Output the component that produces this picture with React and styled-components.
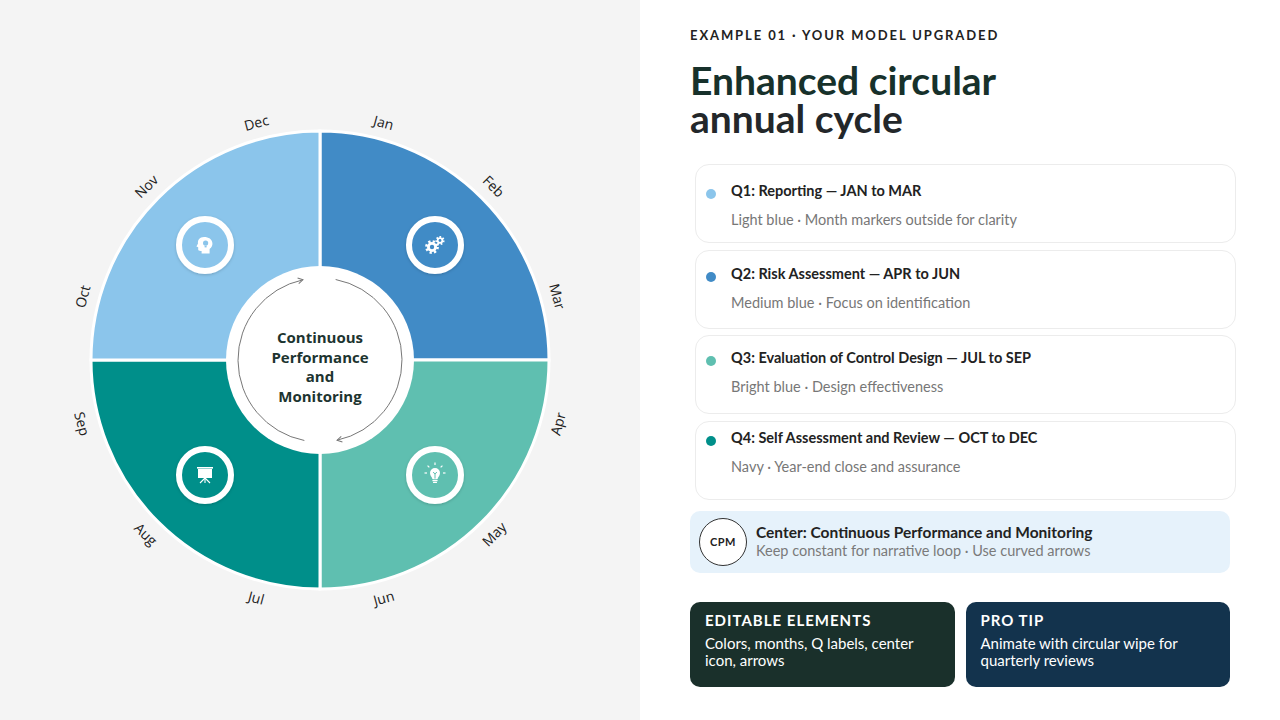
import React from 'react';
import styled, { createGlobalStyle } from 'styled-components';

const GlobalStyle = createGlobalStyle`
  html, body {
    margin: 0;
    padding: 0;
    width: 1280px;
    height: 720px;
    overflow: hidden;
    background: #ffffff;
  }
  * { box-sizing: border-box; }
`;

const SIZE = 540;
const C = SIZE / 2;
const R_OUT = 229;
const R_IN = 94;
const R_LOOP = 82;

// angle measured clockwise from 12 o'clock
const pt = (r, deg) => {
  const a = (deg * Math.PI) / 180;
  return [C + r * Math.sin(a), C - r * Math.cos(a)];
};

const quadrants = [
  { from: 0, to: 90, color: '#418bc6', icon: 'gears', bx: 1, by: -1 },
  { from: 90, to: 180, color: '#5fbfb0', icon: 'bulb', bx: 1, by: 1 },
  { from: 180, to: 270, color: '#008f8a', icon: 'board', bx: -1, by: 1 },
  { from: 270, to: 360, color: '#8bc5eb', icon: 'head', bx: -1, by: -1 },
];

const months = ['Jan', 'Feb', 'Mar', 'Apr', 'May', 'Jun', 'Jul', 'Aug', 'Sep', 'Oct', 'Nov', 'Dec'];

const quarters = [
  { dot: '#8bc5eb', pad: 16, title: 'Q1: Reporting — JAN to MAR', sub: 'Light blue · Month markers outside for clarity' },
  { dot: '#418bc6', pad: 13, title: 'Q2: Risk Assessment — APR to JUN', sub: 'Medium blue · Focus on identification' },
  { dot: '#5fbfb0', pad: 12, title: 'Q3: Evaluation of Control Design — JUL to SEP', sub: 'Bright blue · Design effectiveness' },
  { dot: '#008f8a', pad: 6, title: 'Q4: Self Assessment and Review — OCT to DEC', sub: 'Navy · Year-end close and assurance' },
];

const Page = styled.div`
  display: flex;
  width: 1280px;
  height: 720px;
`;

const ChartPanel = styled.section`
  width: 640px;
  height: 720px;
  background: #f4f4f4;
  display: flex;
  align-items: center;
  justify-content: center;
`;

const ChartSvg = styled.svg`
  display: block;
  overflow: visible;
  font-family: 'Open Sans', 'Noto Sans', sans-serif;
`;

const InfoPanel = styled.section`
  flex: 1;
  padding: 27px 50px 0 50px;
  display: flex;
  flex-direction: column;
  font-family: Lato, 'Open Sans', sans-serif;
  color: #222;
`;

const Eyebrow = styled.div`
  font-size: 13px;
  font-weight: 700;
  letter-spacing: 1.9px;
  line-height: 16px;
  color: #222;
`;

const Title = styled.h1`
  margin: 18px 0 0 0;
  font-size: 39px;
  line-height: 38px;
  font-weight: 700;
  color: #17312b;
`;

const TitleTail = styled.span`
  color: #23272a;
`;

const QuarterList = styled.div`
  margin: 27px -6px 0 5px;
  display: flex;
  flex-direction: column;
  gap: 6.5px;
`;

const QuarterCard = styled.div`
  height: 79px;
  border: 1px solid #ececec;
  border-radius: 14px;
  background: #fff;
  padding: ${(p) => p.$pad}px 16px 0 10px;
  display: flex;
  gap: 15px;
`;

const Dot = styled.span`
  flex: none;
  width: 10px;
  height: 10px;
  border-radius: 50%;
  margin-top: 8px;
  background: ${(p) => p.$color};
`;

const CardText = styled.div`
  display: flex;
  flex-direction: column;
`;

const CardTitle = styled.div`
  font-size: 14.5px;
  font-weight: 700;
  line-height: 20px;
  color: #222;
`;

const CardSub = styled.div`
  margin-top: 10px;
  font-size: 14.5px;
  line-height: 18px;
  color: #777;
`;

const CenterNote = styled.div`
  margin-top: 11px;
  height: 62px;
  border-radius: 10px;
  background: #e6f2fb;
  display: flex;
  align-items: center;
  gap: 9px;
  padding-left: 9px;
`;

const Badge = styled.div`
  flex: none;
  width: 48px;
  height: 48px;
  border-radius: 50%;
  border: 1px solid #333;
  background: #fff;
  display: flex;
  align-items: center;
  justify-content: center;
  font-size: 11px;
  font-weight: 700;
  letter-spacing: 0.5px;
  color: #222;
`;

const NoteText = styled.div`
  margin-top: -2px;
`;

const NoteTitle = styled.div`
  font-size: 15.5px;
  font-weight: 700;
  line-height: 20px;
  color: #222;
`;

const NoteSub = styled.div`
  font-size: 14.5px;
  line-height: 18px;
  color: #7a7a7a;
`;

const TipRow = styled.div`
  margin-top: 29px;
  display: grid;
  grid-template-columns: 1fr 1fr;
  gap: 11px;
`;

const TipCard = styled.div`
  height: 85px;
  border-radius: 10px;
  padding: 9px 15px 0 15px;
  background: ${(p) => p.$bg};
  color: #fff;
`;

const TipTitle = styled.div`
  font-size: 15px;
  font-weight: 700;
  letter-spacing: 1px;
  line-height: 18px;
`;

const TipBody = styled.div`
  margin-top: 6px;
  font-size: 15px;
  line-height: 17px;
`;

const Icon = ({ type, color }) => {
  if (type === 'gears') {
    return (
      <g fill="#fff">
        <circle cx={-3} cy={2} r={5.6} fill="none" stroke="#fff" strokeWidth={2.6} strokeDasharray="2.2 2.2" />
        <circle cx={-3} cy={2} r={5} />
        <circle cx={-3} cy={2} r={2.2} fill={color} />
        <circle cx={5} cy={-4.5} r={3.6} fill="none" stroke="#fff" strokeWidth={2} strokeDasharray="1.6 1.6" />
        <circle cx={5} cy={-4.5} r={3.2} />
        <circle cx={5} cy={-4.5} r={1.4} fill={color} />
      </g>
    );
  }
  if (type === 'bulb') {
    const rays = [-90, -45, 0, 45, 90];
    return (
      <g>
        {rays.map((a) => {
          const rad = (a * Math.PI) / 180;
          return (
            <line
              key={a}
              x1={8 * Math.sin(rad)}
              y1={-2 - 8 * Math.cos(rad)}
              x2={10.5 * Math.sin(rad)}
              y2={-2 - 10.5 * Math.cos(rad)}
              stroke="#fff"
              strokeWidth={1.2}
            />
          );
        })}
        <path d="M-5 -2 A5 5 0 1 1 5 -2 C5 1 2.6 2 2.6 4 L-2.6 4 C-2.6 2 -5 1 -5 -2 Z" fill="#fff" />
        <rect x={-2.6} y={4.8} width={5.2} height={1.4} rx={0.5} fill="#fff" />
        <rect x={-2} y={6.7} width={4} height={1.4} rx={0.6} fill="#fff" />
        <path d="M-1.8 -3 L0 -0.8 L1.8 -3 M0 -0.8 L0 3.6" fill="none" stroke={color} strokeWidth={1} />
      </g>
    );
  }
  if (type === 'board') {
    return (
      <g fill="#fff" stroke="#fff">
        <rect x={-8} y={-8} width={16} height={1.6} stroke="none" />
        <rect x={-7} y={-6} width={14} height={9} stroke="none" />
        <line x1={0} y1={3} x2={-5} y2={8} strokeWidth={1.1} />
        <line x1={0} y1={3} x2={5} y2={8} strokeWidth={1.1} />
        <line x1={0} y1={3} x2={0} y2={8} strokeWidth={1.1} />
      </g>
    );
  }
  // head with an idea inside
  return (
    <g>
      <path
        d="M-1 -8 C-5.5 -8 -7.5 -4.8 -7 -1.6 L-8.6 1.6 L-6.8 2.2 L-6.8 4.6 C-6.8 5.6 -5.8 6 -4.4 6 L-3.4 6 L-3.4 8.5 L4.6 8.5 L4.6 4 C6.8 2.6 7.6 0.4 7.4 -2 C7 -5.8 3.8 -8 -1 -8 Z"
        fill="#fff"
      />
      <circle cx={0.6} cy={-2} r={2.6} fill={color} />
      <rect x={-0.4} y={0.6} width={2} height={1.8} fill={color} />
    </g>
  );
};

const Chart = () => {
  const loopArc = (a1, a2) => {
    const [x1, y1] = pt(R_LOOP, a1);
    const [x2, y2] = pt(R_LOOP, a2);
    return `M${x1} ${y1} A${R_LOOP} ${R_LOOP} 0 0 1 ${x2} ${y2}`;
  };
  const centerLines = ['Continuous', 'Performance', 'and', 'Monitoring'];

  return (
    <ChartSvg width={SIZE} height={SIZE} viewBox={`0 0 ${SIZE} ${SIZE}`}>
      <defs>
        <marker id="arrowHead" viewBox="0 0 10 10" refX="8" refY="5" markerWidth="7" markerHeight="7" orient="auto">
          <path d="M1 1 L8 5 L1 9" fill="none" stroke="#777" strokeWidth="1.4" />
        </marker>
        <filter id="badgeShadow" x="-30%" y="-30%" width="160%" height="160%">
          <feDropShadow dx="0" dy="1" stdDeviation="1.5" floodColor="#000" floodOpacity="0.18" />
        </filter>
      </defs>

      {quadrants.map((q) => {
        const [x1, y1] = pt(R_OUT, q.from);
        const [x2, y2] = pt(R_OUT, q.to);
        return (
          <path
            key={q.from}
            d={`M${C} ${C} L${x1} ${y1} A${R_OUT} ${R_OUT} 0 0 1 ${x2} ${y2} Z`}
            fill={q.color}
            stroke="#fff"
            strokeWidth={3}
          />
        );
      })}

      <circle cx={C} cy={C} r={R_IN} fill="#fff" />
      <path d={loopArc(11, 168)} fill="none" stroke="#777" strokeWidth={1} markerEnd="url(#arrowHead)" />
      <path d={loopArc(191, 348)} fill="none" stroke="#777" strokeWidth={1} markerEnd="url(#arrowHead)" />

      <text textAnchor="middle" fontSize="15" fontWeight="700" fill="#1d3430">
        {centerLines.map((l, i) => (
          <tspan key={l} x={C} y={C - 17 + i * 19.5}>
            {l}
          </tspan>
        ))}
      </text>

      {quadrants.map((q) => {
        const cx = C + q.bx * 115;
        const cy = C + q.by * 115;
        return (
          <g key={q.icon} transform={`translate(${cx} ${cy})`}>
            <circle r={26} fill={q.color} stroke="#fff" strokeWidth={6} filter="url(#badgeShadow)" />
            <Icon type={q.icon} color={q.color} />
          </g>
        );
      })}

      {months.map((m, i) => {
        const deg = 15 + i * 30;
        const [x, y] = pt(246, deg);
        const rot = deg > 90 && deg < 270 ? deg - 180 : deg > 270 ? deg - 360 : deg;
        return (
          <text
            key={m}
            x={x}
            y={y}
            fontSize="14"
            fill="#222"
            textAnchor="middle"
            dominantBaseline="central"
            transform={`rotate(${rot} ${x} ${y})`}
          >
            {m}
          </text>
        );
      })}
    </ChartSvg>
  );
};

const App = () => (
  <Page>
    <GlobalStyle />
    <ChartPanel>
      <Chart />
    </ChartPanel>
    <InfoPanel>
      <Eyebrow>EXAMPLE 01 · YOUR MODEL UPGRADED</Eyebrow>
      <Title>
        Enhanced circular
        <br />
        <TitleTail>annual cycle</TitleTail>
      </Title>

      <QuarterList>
        {quarters.map((q) => (
          <QuarterCard key={q.title} $pad={q.pad}>
            <Dot $color={q.dot} />
            <CardText>
              <CardTitle>{q.title}</CardTitle>
              <CardSub>{q.sub}</CardSub>
            </CardText>
          </QuarterCard>
        ))}
      </QuarterList>

      <CenterNote>
        <Badge>CPM</Badge>
        <NoteText>
          <NoteTitle>Center: Continuous Performance and Monitoring</NoteTitle>
          <NoteSub>Keep constant for narrative loop · Use curved arrows</NoteSub>
        </NoteText>
      </CenterNote>

      <TipRow>
        <TipCard $bg="#1a302b">
          <TipTitle>EDITABLE ELEMENTS</TipTitle>
          <TipBody>
            Colors, months, Q labels, center
            <br />
            icon, arrows
          </TipBody>
        </TipCard>
        <TipCard $bg="#13334d">
          <TipTitle>PRO TIP</TipTitle>
          <TipBody>
            Animate with circular wipe for
            <br />
            quarterly reviews
          </TipBody>
        </TipCard>
      </TipRow>
    </InfoPanel>
  </Page>
);

export default App;
